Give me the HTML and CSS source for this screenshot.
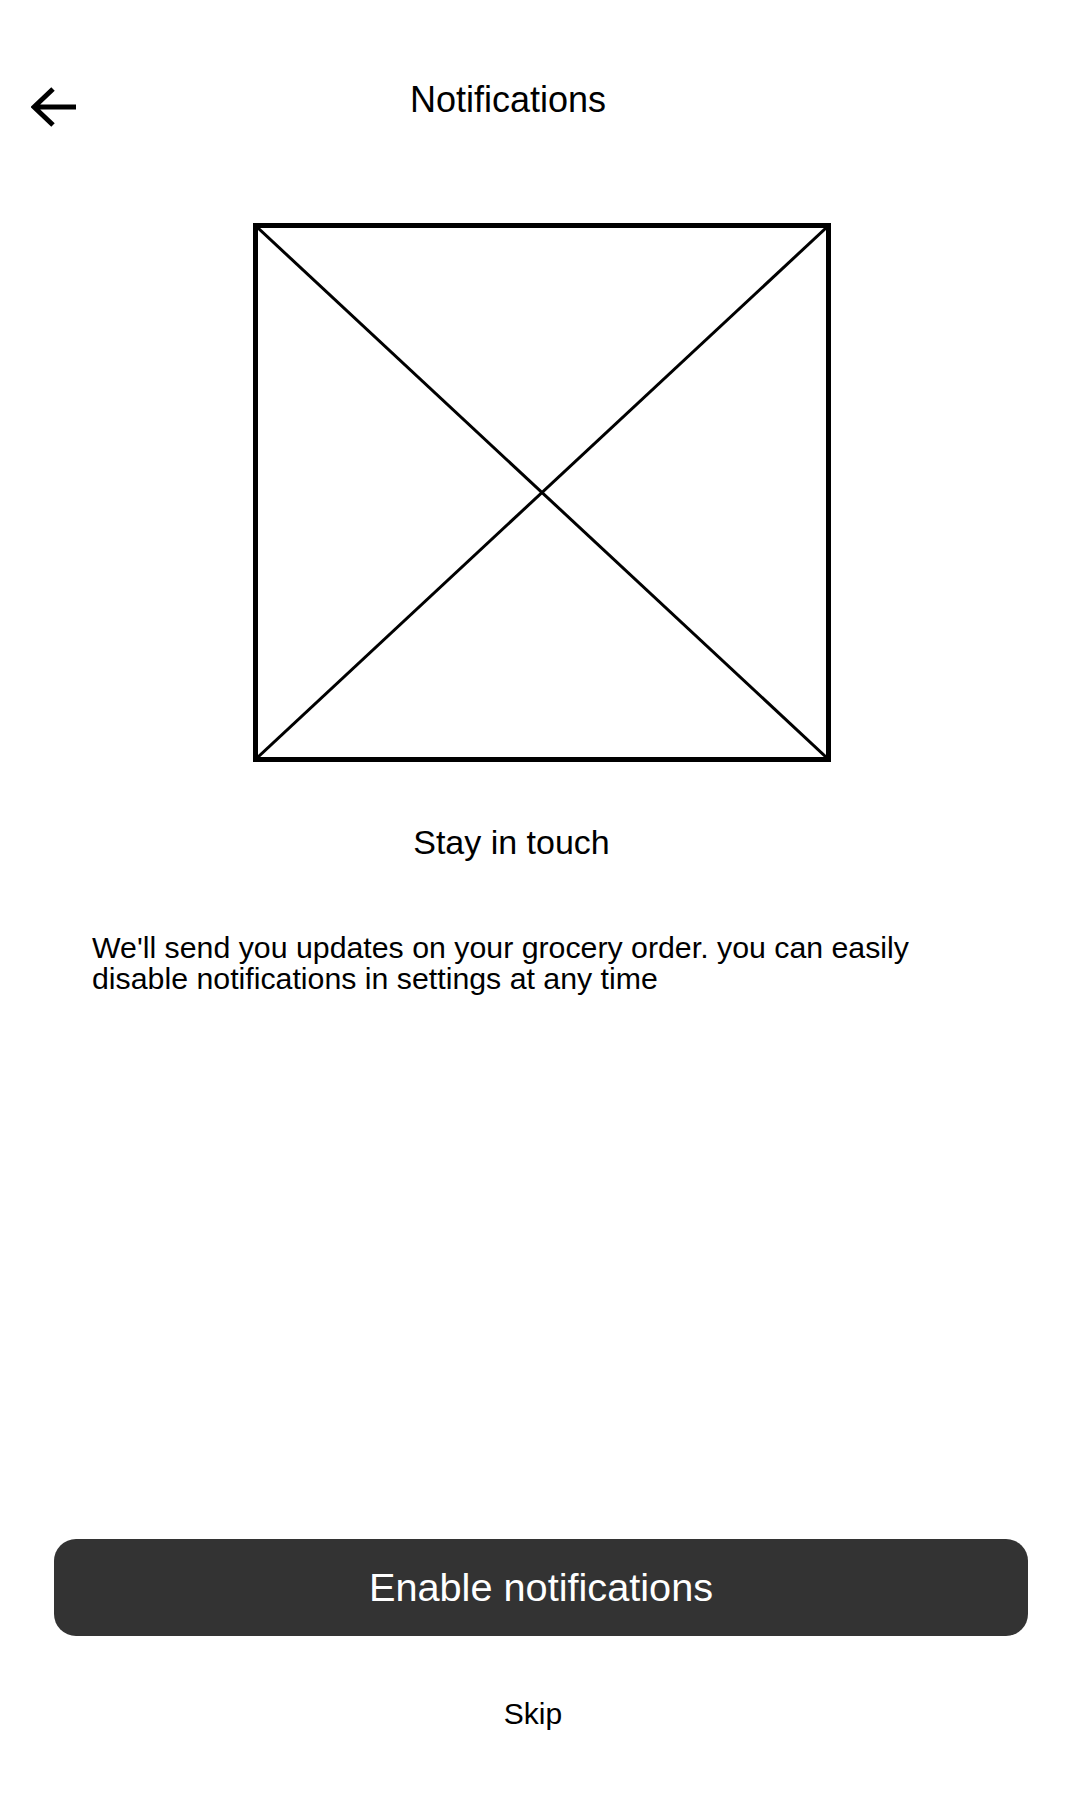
FILE: index.html
```html
<!DOCTYPE html>
<html lang="en">
<head>
<meta charset="utf-8">
<title>Notifications</title>
<link rel="stylesheet" href="styles.css">
</head>
<body>
<div class="screen">
  <header class="topbar">
    <button class="back" aria-label="Back">
      <svg width="46" height="40" viewBox="0 0 46 40">
        <path d="M22 2 L3 20 L22 38 M3 20 L45 20" fill="none" stroke="#000" stroke-width="5" stroke-linejoin="miter"/>
      </svg>
    </button>
    <h1 class="title">Notifications</h1>
  </header>

  <div class="placeholder">
    <svg class="cross" viewBox="0 0 100 100" preserveAspectRatio="none">
      <line x1="0" y1="0" x2="100" y2="100" stroke="#000" stroke-width="3" vector-effect="non-scaling-stroke"/>
      <line x1="100" y1="0" x2="0" y2="100" stroke="#000" stroke-width="3" vector-effect="non-scaling-stroke"/>
    </svg>
  </div>

  <h2 class="heading">Stay in touch</h2>

  <p class="body">We'll send you updates on your grocery order. you can easily disable notifications in settings at any time</p>

  <button class="primary">Enable notifications</button>
  <button class="skip">Skip</button>
</div>
</body>
</html>
```

FILE: styles.css
```css
html, body {
  margin: 0;
  padding: 0;
  background: #fff;
}

body {
  font-family: "Liberation Sans", Arial, sans-serif;
  color: #000;
}

.screen {
  width: 1080px;
  height: 1800px;
  display: flex;
  flex-direction: column;
  box-sizing: border-box;
  padding-bottom: 69px;
}

.topbar {
  display: flex;
  align-items: flex-start;
  padding: 80px 0 0 31px;
  height: 40px;
}

.back {
  border: 0;
  background: none;
  padding: 0;
  margin: 7px 0 0 0;
  width: 46px;
  height: 40px;
  display: block;
}

.back svg {
  display: block;
}

.title {
  flex: 1;
  margin: 0 141px 0 0;
  font-size: 36px;
  font-weight: normal;
  line-height: 40px;
  text-align: center;
}

.placeholder {
  position: relative;
  margin: 103px 0 0 253px;
  width: 578px;
  height: 539px;
  box-sizing: border-box;
  border: 5px solid #000;
}

.cross {
  display: block;
  width: 100%;
  height: 100%;
}

.heading {
  margin: 60px 57px 0 0;
  font-size: 34px;
  font-weight: normal;
  line-height: 40px;
  text-align: center;
}

.body {
  margin: 70px 0 0 0;
  padding: 0 92px;
  font-size: 30.3px;
  line-height: 31px;
}

.primary {
  margin: auto 52px 0 54px;
  height: 97px;
  border: 0;
  border-radius: 22px;
  background: #333333;
  color: #fff;
  font-family: "Liberation Sans", Arial, sans-serif;
  font-size: 39.7px;
  line-height: 97px;
  padding: 0;
  text-align: center;
}

.skip {
  margin: 61px 0 0 0;
  padding: 0 14px 0 0;
  border: 0;
  background: none;
  color: #000;
  font-family: "Liberation Sans", Arial, sans-serif;
  font-size: 30px;
  line-height: 34px;
  text-align: center;
}
```
